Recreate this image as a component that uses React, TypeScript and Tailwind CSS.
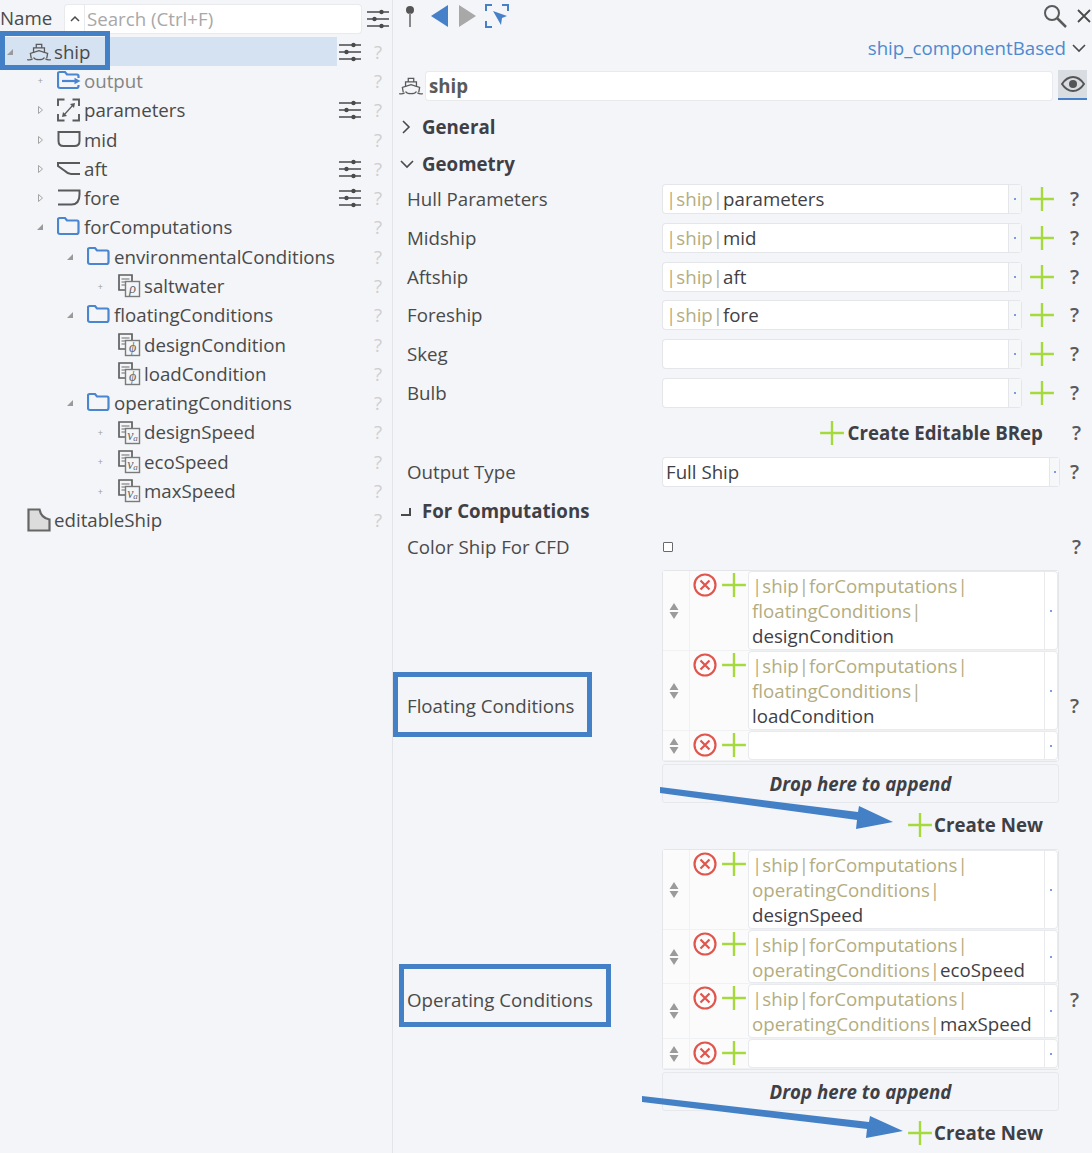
import type { ReactNode } from 'react'

const Sliders = () => (
  <svg width="24" height="20" viewBox="0 0 24 20" fill="none" stroke="#4a4a4a" strokeWidth="1.4">
    <path d="M1 3h22M1 10h22M1 17h22" />
    <circle cx="15.5" cy="3" r="2.2" fill="#4a4a4a" stroke="none" />
    <circle cx="8.5" cy="10" r="2.2" fill="#4a4a4a" stroke="none" />
    <circle cx="15.5" cy="17" r="2.2" fill="#4a4a4a" stroke="none" />
  </svg>
)

const ShipIcon = () => (
  <svg width="24" height="20" viewBox="0 0 26 22" fill="none" stroke="#5a5a5a" strokeWidth="1.4">
    <path d="M10 6V2.500h6V6M7 12V6.500h12V12" />
    <path d="M4.500 18 3.500 12.500 13 9.500l9.500 3-1 5.500" />
    <path d="M7 17c1.500 2.500 3.500 2.500 6 2.500s4.500 0 6-2.500" />
    <path d="M0 19.500c2 .5 4 .5 6-1M20 18.500c2 1.500 4 1.500 6 1" />
  </svg>
)

const Folder = () => (
  <svg width="24" height="22" viewBox="0 0 24 22" fill="none" stroke="#4a86cf" strokeWidth="2.200">
    <path d="M1 16V3.500C1 2.500 1.500 2 2.500 2H8l2 2.500h10c1 0 1.500.7 1.500 1.700V16c0 1.300-1 2-2 2H3c-1.300 0-2-.7-2-2z" />
  </svg>
)

const OutputIcon = () => (
  <svg width="24" height="22" viewBox="0 0 24 22" fill="none" stroke="#4a86cf" strokeWidth="2.200">
    <path d="M21.500 8V6.200c0-1-.7-1.700-1.500-1.700H10L8 2H2.500C1.500 2 1 2.500 1 3.500V16c0 1.300.7 2 2 2h16.500c1 0 2-.7 2-2v-1" />
    <path d="M5 11h14" />
    <path d="M23.500 11l-6-3.200v6.400z" fill="#4a86cf" stroke="none" />
  </svg>
)

const ParamsIcon = () => (
  <svg width="24" height="24" viewBox="0 0 24 24" fill="none" stroke="#5a5a5a" strokeWidth="1.900">
    <path d="M1 8V1.500h6.500M15.500 1.500H22V8M22 16v6.500h-6.500M7.500 22.500H1V16" />
    <path d="M7 17 16 7" strokeWidth="1.200" />
    <path d="M18 5l-5 1 4 4zM5 19l5-1-4-4z" fill="#5a5a5a" stroke="none" />
  </svg>
)

const MidIcon = () => (
  <svg width="24" height="22" viewBox="0 0 24 22" fill="none" stroke="#5a5a5a" strokeWidth="2">
    <path d="M1.500 3v9c0 3 2 5 5 5h11c3 0 5-2 5-5V3z" />
  </svg>
)

const AftIcon = () => (
  <svg width="24" height="22" viewBox="0 0 24 22" fill="none" stroke="#5a5a5a" strokeWidth="2">
    <path d="M23 5H1v3l7 5c2 2 4 3 6 3h9" />
  </svg>
)

const ForeIcon = () => (
  <svg width="24" height="22" viewBox="0 0 24 22" fill="none" stroke="#5a5a5a" strokeWidth="2">
    <path d="M1 3.500h21.500v4c0 7-3 10-8 10H1" />
  </svg>
)

const DocIcon = ({ letter, sub }: { letter: string; sub?: string }) => (
  <svg width="24" height="24" viewBox="0 0 24 24" fill="none">
    <path d="M15 16H2V1h13v15z" stroke="#5f5f5f" strokeWidth="1.700" fill="#f3f5f8" />
    <path d="M4.500 5h8M4.500 8h6M4.500 11h4" stroke="#6d6d6d" strokeWidth="1.200" />
    <rect x="8.500" y="7.500" width="14" height="15" fill="#f3f5f8" stroke="#7a7a7a" strokeWidth="1.400" />
    <text x="15.500" y="19" textAnchor="middle" fontFamily="'Liberation Serif', serif" fontStyle="italic" fontSize="14" fill="#666">
      {letter}
      {sub && <tspan fontSize="9" dy="1">{sub}</tspan>}
    </text>
  </svg>
)

const EditableIcon = () => (
  <svg width="24" height="24" viewBox="0 0 24 24">
    <path d="M1.500 1.500h11c1 5 4 9 10 10v11h-21z" fill="#dcdcdc" stroke="#666" strokeWidth="2.200" />
  </svg>
)

const Plus = ({ size = 26 }: { size?: number }) => (
  <svg width={size} height={size} viewBox="0 0 24 24" stroke="#a6d93c" strokeWidth="2.200">
    <path d="M12 1v22M1 12h22" />
  </svg>
)

const Remove = () => (
  <svg width="24" height="24" viewBox="0 0 24 24" fill="none" stroke="#e0564c" strokeWidth="2.200">
    <circle cx="12" cy="12" r="10.500" />
    <path d="M7.500 7.500l9 9M16.500 7.500l-9 9" />
  </svg>
)

const Sorter = () => (
  <svg width="10" height="16" viewBox="0 0 10 16" fill="#9b9b9b">
    <path d="M5 0l4.500 7H.5zM5 16 .5 9h9z" />
  </svg>
)

const DropDot = () => <span className="h-[2px] w-[2px] bg-[#7f9be0]" />

const TreeArrow = ({ kind }: { kind: string }) => {
  if (kind === 'open') return <svg width="6" height="6" viewBox="0 0 6 6" fill="#9a9a9a"><path d="M6 0v6H0z" /></svg>
  if (kind === 'closed') return <svg width="5" height="8" viewBox="0 0 5 8" fill="none" stroke="#a5a5a5"><path d="M.5 .5 4.500 4 .5 7.500z" /></svg>
  if (kind === 'dot') return <span className="text-[9px] leading-none text-[#9a9a9a]">+</span>
  return null
}

const treeRows: { name: string; depth: number; arrow: string; icon: ReactNode; sliders?: boolean; muted?: boolean }[] = [
  { name: 'output', depth: 1, arrow: 'dot', icon: <OutputIcon />, muted: true },
  { name: 'parameters', depth: 1, arrow: 'closed', icon: <ParamsIcon />, sliders: true },
  { name: 'mid', depth: 1, arrow: 'closed', icon: <MidIcon /> },
  { name: 'aft', depth: 1, arrow: 'closed', icon: <AftIcon />, sliders: true },
  { name: 'fore', depth: 1, arrow: 'closed', icon: <ForeIcon />, sliders: true },
  { name: 'forComputations', depth: 1, arrow: 'open', icon: <Folder /> },
  { name: 'environmentalConditions', depth: 2, arrow: 'open', icon: <Folder /> },
  { name: 'saltwater', depth: 3, arrow: 'dot', icon: <DocIcon letter="ρ" /> },
  { name: 'floatingConditions', depth: 2, arrow: 'open', icon: <Folder /> },
  { name: 'designCondition', depth: 3, arrow: '', icon: <DocIcon letter="ϕ" /> },
  { name: 'loadCondition', depth: 3, arrow: '', icon: <DocIcon letter="ϕ" /> },
  { name: 'operatingConditions', depth: 2, arrow: 'open', icon: <Folder /> },
  { name: 'designSpeed', depth: 3, arrow: 'dot', icon: <DocIcon letter="v" sub="a" /> },
  { name: 'ecoSpeed', depth: 3, arrow: 'dot', icon: <DocIcon letter="v" sub="a" /> },
  { name: 'maxSpeed', depth: 3, arrow: 'dot', icon: <DocIcon letter="v" sub="a" /> },
  { name: 'editableShip', depth: 0, arrow: '', icon: <EditableIcon /> },
]

const indents = ['w-[27px]', 'w-[57px]', 'w-[87px]', 'w-[117px]']

const TreeRow = ({ row }: { row: (typeof treeRows)[number] }) => (
  <div className="flex h-[29.3px] items-center">
    <div className={`${indents[row.depth]} flex h-full shrink-0 items-center justify-end pr-[14px]`}>
      <TreeArrow kind={row.arrow} />
    </div>
    <div className="flex w-[27px] shrink-0 items-center">{row.icon}</div>
    <span className={row.muted ? 'text-[#858585]' : 'text-[#4a4a4a]'}>{row.name}</span>
    <div className="ml-auto flex w-[54px] items-center">
      <div className="w-[24px]">{row.sliders && <Sliders />}</div>
      <span className="ml-[12px] text-[#cfcfcf]">?</span>
    </div>
  </div>
)

const Help = () => <span className="text-[20px] font-semibold text-[#5a5a5a]">?</span>

const RefField = ({ value }: { value?: string }) => (
  <div className="flex h-[28px] w-[358px] rounded-[3px] bg-white shadow-[0_0_0_1px_#e4e6ea]">
    <div className="flex min-w-0 flex-1 items-center pl-[3px]">
      {value && (
        <>
          <span className="text-[#b3ad7f]">|ship|</span>
          <span className="text-[#3f4046]">{value}</span>
        </>
      )}
    </div>
    <div className="flex w-[13px] items-center justify-center border-l border-[#e4e6ea] bg-[#f6f7f9]"><DropDot /></div>
  </div>
)

const GeoRow = ({ label, value }: { label: string; value?: string }) => (
  <div className="flex h-[38.700px] items-center pl-[14px]">
    <span className="w-[256px] shrink-0 text-[#4a4a4a]">{label}</span>
    <RefField value={value} />
    <div className="ml-[8px] flex w-[26px] justify-center"><Plus /></div>
    <div className="ml-[15px]"><Help /></div>
  </div>
)

const ListRow = ({ lines, last, rowClass }: { lines: string[]; last?: string; rowClass: string }) => (
  <div className={`${rowClass} flex border-b border-[#f0f1f3] bg-[#fbfbfc]`}>
    <div className="flex w-[27px] shrink-0 items-center justify-center border-r border-[#f0f1f3] pr-[4px]"><Sorter /></div>
    <div className="flex w-[29px] shrink-0 justify-center pt-[2px]"><Remove /></div>
    <div className="flex w-[30px] shrink-0 justify-center pt-[1px]"><Plus /></div>
    <div className="my-px mr-px flex min-w-0 flex-1 rounded-[3px] bg-white shadow-[0_0_0_1px_#e8eaed]">
      <div className="flex-1 pl-[3px] pt-[1px] leading-[25px]">
        {lines.map((l, i) => (
          <div key={i}>
            <span className="text-[#b3ad7f]">{l}</span>
            {i === lines.length - 1 && last && <span className="text-[#3f4046]">{last}</span>}
          </div>
        ))}
      </div>
      <div className="flex w-[13px] items-center justify-center border-l border-[#e8eaed]"><DropDot /></div>
    </div>
  </div>
)

const DropZone = () => (
  <div className="mt-[2px] flex h-[39px] items-center justify-center rounded-[3px] border border-[#e6e8eb] font-bold italic text-[#3f4046]">
    Drop here to append
  </div>
)

const CreateButton = ({ label, gap }: { label: string; gap: string }) => (
  <div className="flex items-center justify-end font-bold text-[#3f4046]">
    <Plus />
    <span className={gap}>{label}</span>
  </div>
)

const SectionHeader = ({ icon, label, rowClass }: { icon: ReactNode; label: string; rowClass: string }) => (
  <div className={`${rowClass} flex items-center pl-[7px]`}>
    <div className="flex w-[22px] shrink-0 items-center">{icon}</div>
    <span className="font-bold text-[#3f4046]">{label}</span>
  </div>
)

const ChevronRight = () => (
  <svg width="12" height="14" viewBox="0 0 12 14" fill="none" stroke="#4a4a4a" strokeWidth="1.600"><path d="M3 1l6 6-6 6" /></svg>
)
const ChevronDown = () => (
  <svg width="14" height="12" viewBox="0 0 14 12" fill="none" stroke="#4a4a4a" strokeWidth="1.600"><path d="M1 3l6 6 6-6" /></svg>
)

export default function App() {
  return (
    <div className="relative flex h-[1153px] w-[1092px] overflow-hidden bg-[#f3f5f8] font-['Open_Sans',sans-serif] text-[18.7px] leading-normal">
      {/* tree */}
      <aside className="flex h-full w-[393px] shrink-0 flex-col border-r border-[#e2e4e8]">
        <div className="flex h-[37px] shrink-0 items-center">
          <span className="w-[65px] shrink-0 text-[#4a4a4a]">Name</span>
          <div className="flex h-[28px] w-[296px] rounded-[3px] bg-white shadow-[0_0_0_1px_#e8eaed]">
            <div className="flex w-[20px] items-center justify-center border-r border-[#e8eaed]">
              <svg width="10" height="7" viewBox="0 0 10 7" fill="none" stroke="#4a4a4a" strokeWidth="1.500"><path d="M1 6l4-4 4 4" /></svg>
            </div>
            <span className="pl-[2px] text-[#a8a8a8]">Search (Ctrl+F)</span>
          </div>
          <div className="ml-[5px]"><Sliders /></div>
        </div>
        <div className="flex h-[29.300px] items-center">
          <div className="flex h-full w-[337px] items-center bg-[#d5e2f1]">
            <div className="flex w-[27px] shrink-0 items-center justify-end pr-[14px]"><TreeArrow kind="open" /></div>
            <div className="w-[27px] shrink-0"><ShipIcon /></div>
            <span className="text-[#4a4a4a]">ship</span>
          </div>
          <div className="flex flex-1 items-center">
            <div className="ml-px w-[24px]"><Sliders /></div>
            <span className="ml-[12px] text-[#cfcfcf]">?</span>
          </div>
        </div>
        {treeRows.map((r) => <TreeRow key={r.name} row={r} />)}
      </aside>

      {/* properties */}
      <main className="flex min-w-0 flex-1 flex-col pr-[4px]">
        <div className="-mr-[3px] flex h-[32px] shrink-0 items-center pl-[10px]">
          <svg width="14" height="22" viewBox="0 0 14 22"><circle cx="7" cy="5" r="4" fill="#555" /><path d="M7 8v14" stroke="#888" strokeWidth="2" /></svg>
          <svg className="ml-[14px]" width="17" height="22" viewBox="0 0 17 22" fill="#4680c9"><path d="M17 0v22L0 11z" /></svg>
          <svg className="ml-[11px]" width="17" height="22" viewBox="0 0 17 22" fill="#a8a8a8"><path d="M0 0v22l17-11z" /></svg>
          <svg className="ml-[9px]" width="24" height="24" viewBox="0 0 24 24" fill="none" stroke="#4680c9" strokeWidth="2">
            <path d="M1 7V1h6M17 1h6v6M1 17v6h6" />
            <path d="M8 7l14 5-5 2-1 7z" fill="#4680c9" stroke="none" />
          </svg>
          <svg className="ml-auto" width="24" height="24" viewBox="0 0 24 24" fill="none" stroke="#5a5a5a" strokeWidth="2">
            <circle cx="9" cy="9" r="7" /><path d="M14 14l9 9" strokeWidth="2.500" />
          </svg>
          <svg className="ml-[10px]" width="14" height="14" viewBox="0 0 14 14" fill="none" stroke="#4a4a4a" strokeWidth="1.800"><path d="M1 1l12 12M13 1 1 13" /></svg>
        </div>
        <div className="flex h-[32px] shrink-0 items-center justify-end pr-[2px]">
          <span className="text-[#4f89cf]">ship_componentBased</span>
          <div className="ml-[6px]"><ChevronDown /></div>
        </div>
        <div className="mt-[6px] flex h-[30px] shrink-0 items-end">
          <div className="flex h-[28px] w-[33px] shrink-0 items-center justify-center pl-[2px]"><ShipIcon /></div>
          <div className="flex h-[28px] w-[626px] items-center rounded-[3px] bg-white pl-[3px] font-bold text-[#5a5a5a] shadow-[0_0_0_1px_#e8eaed]">ship</div>
          <div className="ml-[6px] flex h-[30px] w-[29px] items-center justify-center border-b-2 border-[#4680c9] bg-[#d9dce1]">
            <svg width="24" height="16" viewBox="0 0 24 16" fill="none" stroke="#555" strokeWidth="2">
              <path d="M1 8c3-4.500 7-7 11-7s8 2.500 11 7c-3 4.500-7 7-11 7S4 12.500 1 8z" /><circle cx="12" cy="8" r="4" fill="#555" stroke="none" />
            </svg>
          </div>
        </div>
        <SectionHeader rowClass="mt-[12px] h-[30px] shrink-0" label="General" icon={<ChevronRight />} />
        <SectionHeader rowClass="mt-[7px] h-[30px] shrink-0" label="Geometry" icon={<ChevronDown />} />
        <div className="mt-px shrink-0">
          <GeoRow label="Hull Parameters" value="parameters" />
          <GeoRow label="Midship" value="mid" />
          <GeoRow label="Aftship" value="aft" />
          <GeoRow label="Foreship" value="fore" />
          <GeoRow label="Skeg" />
          <GeoRow label="Bulb" />
        </div>
        <div className="mt-px flex h-[39px] shrink-0 items-center pr-[7px]">
          <div className="ml-auto"><CreateButton label="Create Editable BRep" gap="ml-[3px]" /></div>
          <div className="ml-[29px]"><Help /></div>
        </div>
        <div className="flex h-[39px] shrink-0 items-center pl-[14px]">
          <span className="w-[256px] shrink-0 text-[#4a4a4a]">Output Type</span>
          <div className="flex h-[28px] w-[396px] rounded-[3px] bg-white shadow-[0_0_0_1px_#e4e6ea]">
            <div className="flex flex-1 items-center pl-[3px] text-[#3f4046]">Full Ship</div>
            <div className="flex w-[10px] items-center justify-center border-l border-[#e4e6ea] bg-[#f6f7f9]"><DropDot /></div>
          </div>
          <div className="ml-[11px]"><Help /></div>
        </div>
        <SectionHeader rowClass="mt-px h-[38px] shrink-0"
          label="For Computations"
          icon={<svg width="11" height="9" viewBox="0 0 11 9" fill="none" stroke="#4a4a4a" strokeWidth="2"><path d="M1 8h9V1" /></svg>} />
        <div className="flex h-[34px] shrink-0 items-center pl-[14px]">
          <span className="w-[256px] shrink-0 text-[#4a4a4a]">Color Ship For CFD</span>
          <div className="h-[10px] w-[10px] rounded-[1px] border border-[#6a6a6a] bg-white" />
          <div className="ml-auto mr-[7px]"><Help /></div>
        </div>

        <div className="mt-[6px] flex h-[272px] shrink-0 items-center pl-[14px]">
          <span className="w-[255px] shrink-0 text-[#4a4a4a]">Floating Conditions</span>
          <div className="flex h-full w-[397px] shrink-0 flex-col">
            <div className="rounded-[3px] border border-[#e4e6ea]">
              <ListRow rowClass="h-[80px]" lines={['|ship|forComputations|', 'floatingConditions|', '']} last="designCondition" />
              <ListRow rowClass="h-[80px]" lines={['|ship|forComputations|', 'floatingConditions|', '']} last="loadCondition" />
              <ListRow rowClass="h-[30px]" lines={[]} />
            </div>
            <DropZone />
            <div className="mt-[8px] pr-[16px]"><CreateButton label="Create New" gap="ml-[1px]" /></div>
          </div>
          <div className="ml-[11px]"><Help /></div>
        </div>

        <div className="mt-[7px] flex h-[302px] shrink-0 items-center pl-[14px]">
          <span className="w-[255px] shrink-0 text-[#4a4a4a]">Operating Conditions</span>
          <div className="flex h-full w-[397px] shrink-0 flex-col">
            <div className="rounded-[3px] border border-[#e4e6ea]">
              <ListRow rowClass="h-[80px]" lines={['|ship|forComputations|', 'operatingConditions|', '']} last="designSpeed" />
              <ListRow rowClass="h-[54px]" lines={['|ship|forComputations|', 'operatingConditions|']} last="ecoSpeed" />
              <ListRow rowClass="h-[55px]" lines={['|ship|forComputations|', 'operatingConditions|']} last="maxSpeed" />
              <ListRow rowClass="h-[30px]" lines={[]} />
            </div>
            <DropZone />
            <div className="mt-[8px] pr-[16px]"><CreateButton label="Create New" gap="ml-[1px]" /></div>
          </div>
          <div className="ml-[11px]"><Help /></div>
        </div>
      </main>

      {/* annotations drawn over the screenshot */}
      <div className="absolute left-0 top-[31px] h-[39px] w-[110px] border-[5px] border-[#4480c6]" />
      <div className="absolute left-[393px] top-[672px] h-[65px] w-[199px] border-[5px] border-[#4480c6]" />
      <div className="absolute left-[399px] top-[964px] h-[63px] w-[212px] border-[5px] border-[#4480c6]" />
      <svg className="pointer-events-none absolute left-0 top-0" width="1092" height="1153" fill="#4480c6" stroke="none">
        <path d="M660 787 858 812l1-6 34 16-37 7 1-9-197-27z" />
        <path d="M642 1096 869 1122l1-6 33 15-37 7 1-9-225-27z" />
      </svg>
    </div>
  )
}
